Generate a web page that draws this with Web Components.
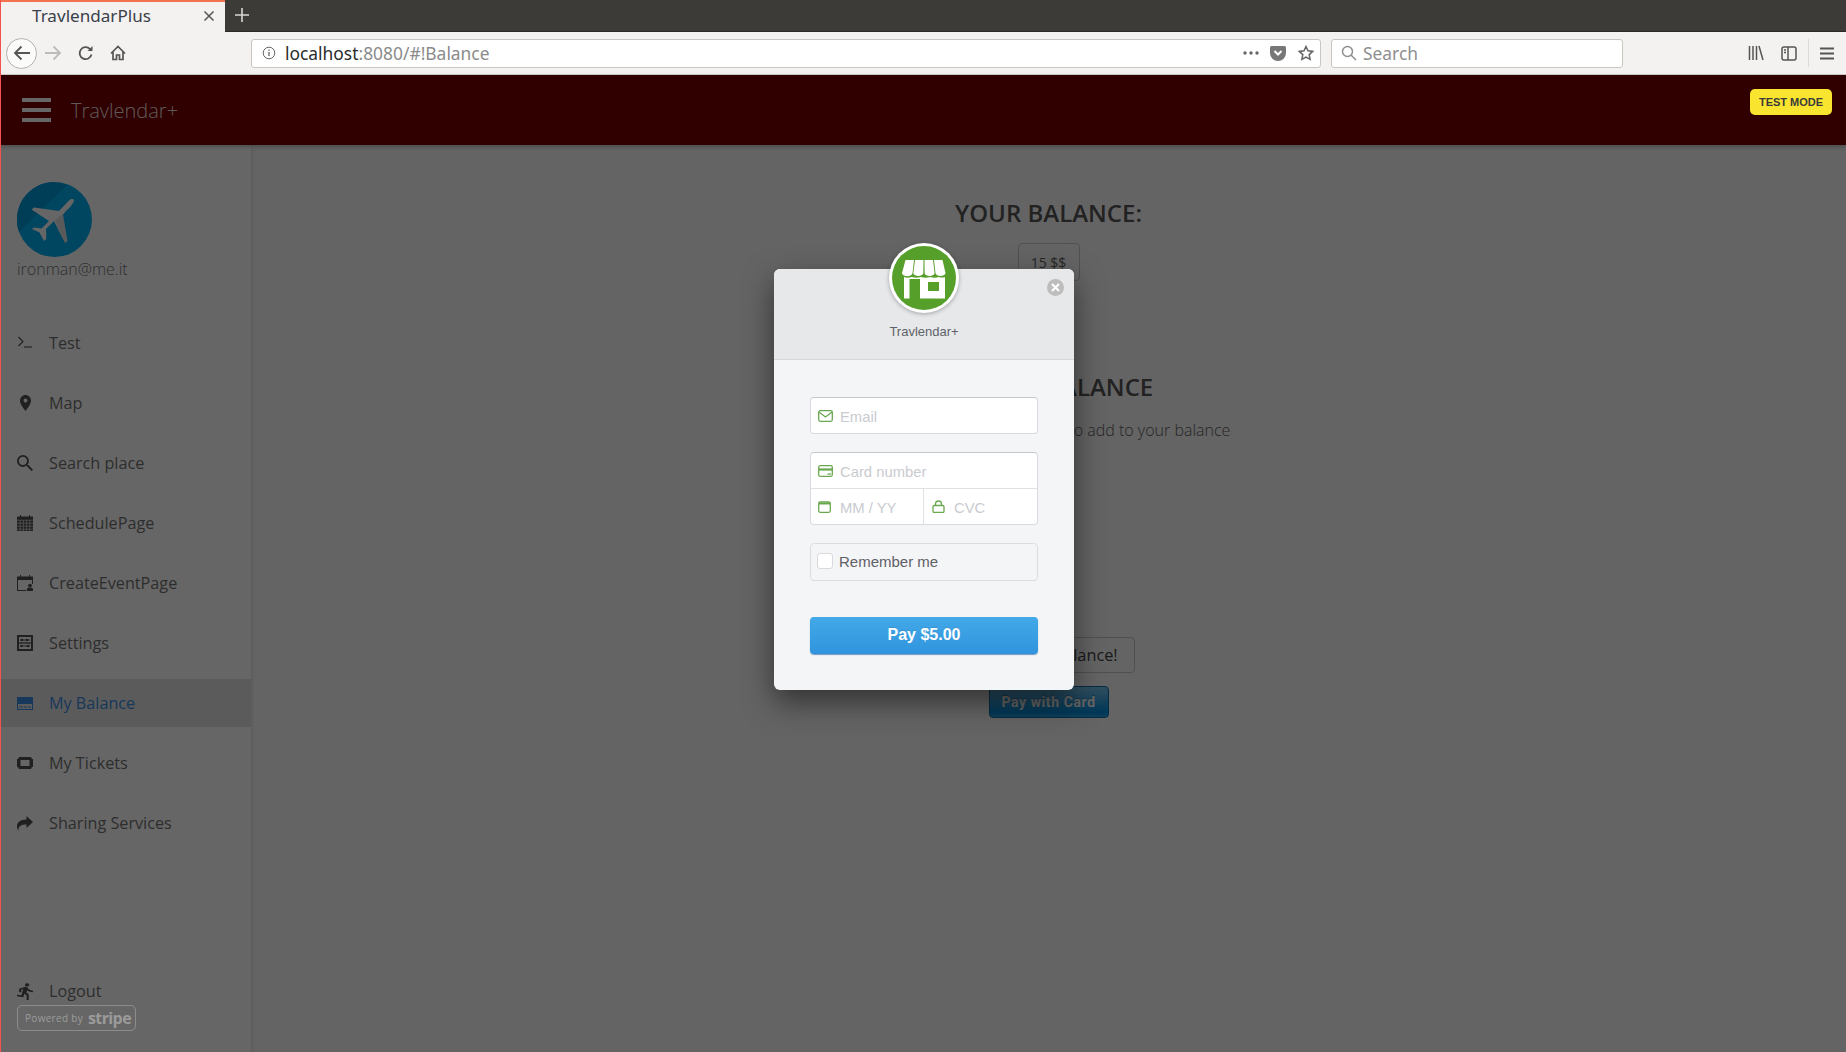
<!DOCTYPE html>
<html>
<head>
<meta charset="utf-8">
<title>TravlendarPlus</title>
<style>
  html, body { margin: 0; height: 100%; overflow: hidden; background: #fff; }
  body { font-family: "Open Sans", sans-serif; display: flex; flex-direction: column; height: 1052px; }
  body::before { content: ""; position: fixed; left: 0; top: 0; bottom: 0; width: 1px; background: #f4514f; z-index: 50; }
</style>
</head>
<body>
<browser-chrome></browser-chrome>
<travel-app>
  <side-drawer slot="drawer">
    <nav-item>
      <svg slot="icon" width="16" height="16" viewBox="0 0 16 16" fill="none" stroke="currentColor" stroke-width="1.1"><path d="M1.500 2 6 6.500 1.500 11"/><path d="M7 12h8"/></svg>
      Test
    </nav-item>
    <nav-item>
      <svg slot="icon" style="margin-left:3px" width="11" height="16" viewBox="5 2 14 20" preserveAspectRatio="none" fill="currentColor"><path d="M12 2C8.130 2 5 5.130 5 9c0 5.250 7 13 7 13s7-7.750 7-13c0-3.870-3.130-7-7-7zm0 9.500a2.500 2.500 0 0 1 0-5 2.500 2.500 0 0 1 0 5z"/></svg>
      Map
    </nav-item>
    <nav-item>
      <svg slot="icon" width="16" height="16" viewBox="3 3 17.500 17.500" fill="currentColor"><path d="M15.500 14h-.79l-.28-.27A6.471 6.471 0 0 0 16 9.500 6.500 6.500 0 1 0 9.500 16c1.610 0 3.090-.59 4.230-1.570l.27.28v.79l5 4.990L20.490 19l-4.990-5zm-6 0C7.010 14 5 11.990 5 9.500S7.010 5 9.500 5 14 7.010 14 9.500 11.990 14 9.500 14z"/></svg>
      Search place
    </nav-item>
    <nav-item>
      <svg slot="icon" width="16" height="16" viewBox="0 0 16 16" fill="currentColor"><path d="M0 1.500h3V0h1v1.500h8V0h1v1.500h3V16H0z"/><path d="M0 5.200h16M0 8.200h16M0 11.200h16M0 14.200h16M3.200 5v11M6.400 5v11M9.600 5v11M12.800 5v11" stroke="#fff" stroke-opacity=".7" stroke-width=".8"/></svg>
      SchedulePage
    </nav-item>
    <nav-item>
      <svg slot="icon" width="16" height="16" viewBox="0 0 16 16" fill="currentColor"><path fill-rule="evenodd" d="M0 1.500h3V0h1v1.500h8V0h1v1.500h3V9h-1V5H1v10h8v1H0z"/><circle cx="13" cy="10.600" r="1.900"/><path d="M9.800 16v-1.600c0-1.200 1.200-1.900 3.200-1.900s3 .7 3 1.900V16z"/></svg>
      CreateEventPage
    </nav-item>
    <nav-item>
      <svg slot="icon" width="16" height="16" viewBox="0 0 16 16" fill="currentColor"><path fill-rule="evenodd" d="M0 0h16v16H0zM2 2v12h12V2z"/><path d="M2 7.300h12v1.400H2z"/><path d="M3 4.500h10v1H3zM3 10.500h10v1H3z"/><circle cx="5" cy="5" r="1.300"/><circle cx="10" cy="5" r="1.300"/><circle cx="4.500" cy="11" r="1.300"/><circle cx="11" cy="11" r="1.300"/></svg>
      Settings
    </nav-item>
    <nav-item active>
      <svg slot="icon" width="16" height="13" viewBox="0 0 16 13" fill="currentColor"><path fill-rule="evenodd" d="M0 0h16v13H0zM1 7v5h14V7z"/><path d="M2 9.500h4v1H2zM7 9.500h3v1H7zM11 9.500h3v1h-3z"/></svg>
      My Balance
    </nav-item>
    <nav-item>
      <svg slot="icon" width="16" height="12" viewBox="0 0 16 12" fill="currentColor"><path fill-rule="evenodd" d="M2 0h12l1 2h1v8h-1l-1 2H2l-1-2H0V2h1zM3.500 3v6h9V3z"/></svg>
      My Tickets
    </nav-item>
    <nav-item>
      <svg slot="icon" width="16" height="15" viewBox="0 0 16 15" fill="currentColor"><path d="M16 6 9.500 0v3.500C3 3.500 0 6.500 0 10.500c0 1.500.5 3 1.500 4.500C1 10 4 8.500 9.500 8.500V12z"/></svg>
      Sharing Services
    </nav-item>
    <nav-item slot="bottom">
      <svg slot="icon" width="16" height="17" viewBox="4 1 15 22" fill="currentColor" preserveAspectRatio="none"><path d="M13.490 5.480c1.100 0 2-.9 2-2s-.9-2-2-2-2 .9-2 2 .9 2 2 2zm-3.600 13.900l1-4.400 2.100 2v6h2v-7.500l-2.100-2 .6-3c1.300 1.500 3.300 2.500 5.500 2.500v-2c-1.900 0-3.500-1-4.300-2.400l-1-1.600c-.4-.6-1-1-1.700-1-.3 0-.5.1-.8.1l-5.200 2.200v4.700h2v-3.400l1.800-.7-1.600 8.100-4.900-1-.4 2 7 1.400z"/></svg>
      Logout
    </nav-item>
  </side-drawer>
  <balance-page></balance-page>
  <checkout-overlay slot="overlay"></checkout-overlay>
</travel-app>

<script>
class BrowserChrome extends HTMLElement {
  constructor() {
    super();
    this.attachShadow({ mode: "open" });
    this.shadowRoot.innerHTML = `
<style>
  :host { display: block; height: 75px; font-family: "Noto Sans", sans-serif; color: #333; flex: none; }
  .tabs { height: 32px; background: #3c3b37; display: flex; box-sizing: border-box; border-bottom: 1px solid #2b2a27; }
  .tab { width: 225px; height: 32px; box-sizing: border-box; background: #f3f2f0; border-top: 2px solid #f4714f; display: flex; align-items: center; padding: 0 10px 3px 32px; font-size: 17.100px; color: #3a3f4a; justify-content: space-between; }
  .new { width: 34px; display: flex; align-items: center; justify-content: center; padding-bottom: 2px; }
  .bar { height: 43px; box-sizing: border-box; background: #f3f2f0; border-bottom: 1px solid #cfcdca; display: flex; align-items: center; position: relative; padding-left: 6px; }
  .btn { width: 32px; height: 32px; display: flex; align-items: center; justify-content: center; flex: none; }
  .nudge { margin-left: 1px; margin-right: -1px; }
  .back { width: 31px; height: 31px; border: 1px solid #b5b3b0; border-radius: 50%; box-sizing: border-box; background: #fbfbfa; }
  .field { height: 29px; box-sizing: border-box; background: #fff; border: 1px solid #c9c6c2; border-radius: 3px; display: flex; align-items: center; font-size: 17.400px; }
  .url { width: 1070px; margin-left: 118px; padding: 0 6px 0 10px; }
  .url .host { color: #2b2b2b; }
  .url .rest { color: #8b8b8b; }
  .url .spacer { flex: 1; }
  .search { width: 292px; margin-left: 10px; padding-left: 9px; color: #8f8f8f; gap: 6px; }
  .right { position: absolute; right: 0; top: 0; bottom: 0; display: flex; align-items: center; }
  .sep { width: 1px; height: 28px; background: #dcdad7; margin: 0 11px 0 10px; }
</style>
<div class="tabs">
  <div class="tab">
    <span>TravlendarPlus</span>
    <svg width="12" height="12" viewBox="0 0 12 12" stroke="#555" stroke-width="1.500"><path d="M1.500 1.500l9 9M10.500 1.500l-9 9"/></svg>
  </div>
  <div class="new"><svg width="14" height="14" viewBox="0 0 14 14" stroke="#d9d8d5" stroke-width="1.600"><path d="M7 0v14M0 7h14"/></svg></div>
</div>
<div class="bar">
  <div class="btn back"><svg width="18" height="16" viewBox="0 0 18 16" fill="none" stroke="#555" stroke-width="1.800"><path d="M17 8H2M8.500 1.500 2 8l6.500 6.500"/></svg></div>
  <div class="btn"><svg width="18" height="16" viewBox="0 0 18 16" fill="none" stroke="#bcbcbc" stroke-width="1.800"><path d="M1 8h15M9.500 1.500 16 8l-6.500 6.500"/></svg></div>
  <div class="btn nudge"><svg width="16" height="16" viewBox="0 0 16 16" fill="none" stroke="#555" stroke-width="1.800"><path d="M13.500 9.500a6 6 0 1 1-1.500-5.500l1.500 1.500"/><path d="M14.500 1v5h-5" fill="#555" stroke="none"/></svg></div>
  <div class="btn nudge"><svg width="16" height="16" viewBox="0 0 16 16" fill="none" stroke="#555" stroke-width="1.700"><path d="M1 8.500 8 1.500l7 7M3 7v7.500h3.500V10h3v4.500H13V7"/></svg></div>
  <div class="field url">
    <svg width="14" height="14" viewBox="0 0 14 14" style="margin:0 9px 0 0" fill="none" stroke="#666"><circle cx="7" cy="7" r="5.800"/><path d="M7 6v4M7 3.500v1.200" stroke-width="1.300"/></svg>
    <span class="host">localhost</span><span class="rest">:8080/#!Balance</span>
    <span class="spacer"></span>
    <svg width="16" height="4" viewBox="0 0 16 4" fill="#666" style="margin-right:11px"><circle cx="2" cy="2" r="1.700"/><circle cx="8" cy="2" r="1.700"/><circle cx="14" cy="2" r="1.700"/></svg>
    <svg width="16" height="15" viewBox="0 0 16 15" style="margin-right:12px"><path fill="#777" d="M1.500 0h13A1.500 1.500 0 0 1 16 1.500V7a8 8 0 0 1-16 0V1.500A1.500 1.500 0 0 1 1.500 0z"/><path d="M4.500 5 8 8.500 11.500 5" stroke="#fff" stroke-width="2" fill="none"/></svg>
    <svg width="16" height="16" viewBox="0 0 16 16" fill="none" stroke="#666" stroke-width="1.500"><path d="M8 1.500l2 4.300 4.700.6-3.500 3.200.9 4.700L8 12l-4.100 2.300.9-4.700L1.300 6.400 6 5.800z"/></svg>
  </div>
  <div class="field search">
    <svg width="16" height="16" viewBox="0 0 16 16" fill="none" stroke="#8f8f8f" stroke-width="1.500"><circle cx="6.500" cy="6.500" r="5"/><path d="M10 10l5 5"/></svg>
    <span>Search</span>
  </div>
  <div class="right">
    <svg width="16" height="16" viewBox="0 0 16 16" stroke="#555" stroke-width="1.500" fill="none" style="margin-right:17px"><path d="M1.500 1v14M5 1v14M8.500 1v14M11 1l4 14"/></svg>
    <svg width="16" height="15" viewBox="0 0 16 15" fill="none" stroke="#555" stroke-width="1.500" style="margin-right:1px"><rect x="1" y="1" width="14" height="13" rx="2"/><path d="M7 1v13M3 4h2M3 6.500h2" /></svg>
    <span class="sep"></span>
    <svg width="14" height="13" viewBox="0 0 14 13" stroke="#555" stroke-width="2" style="margin-right:12px"><path d="M0 1.500h14M0 6.500h14M0 11.500h14"/></svg>
  </div>
</div>`;
  }
}

class TravelApp extends HTMLElement {
  constructor() {
    super();
    this.attachShadow({ mode: "open" });
    this.shadowRoot.innerHTML = `
<style>
  :host { display: flex; flex-direction: column; flex: 1; min-height: 0; position: relative; }
  header { height: 70px; flex: none; background: #780000; display: flex; align-items: center; padding-left: 22px; gap: 20px; box-shadow: 0 2px 4px rgba(0,0,0,.25); z-index: 2; }
  .burger { width: 29px; display: flex; flex-direction: column; gap: 6px; }
  .burger i { display: block; height: 4px; background: #fff; }
  .title { font: 300 20px "Open Sans", sans-serif; color: rgba(255,255,255,.88); }
  .body { flex: 1; display: flex; min-height: 0; }
</style>
<header>
  <div class="burger"><i></i><i></i><i></i></div>
  <div class="title">Travlendar+</div>
</header>
<div class="body">
  <slot name="drawer"></slot>
  <slot></slot>
</div>
<slot name="overlay"></slot>`;
  }
}

class SideDrawer extends HTMLElement {
  constructor() {
    super();
    this.attachShadow({ mode: "open" });
    this.shadowRoot.innerHTML = `
<style>
  :host { display: flex; flex-direction: column; width: 251px; flex: none; box-sizing: border-box; background: #fff; padding: 37px 0 37px 1px; box-shadow: 0 2px 5px rgba(0,0,0,.16); z-index: 1; }
  .avatar { width: 75px; height: 75px; margin-left: 16px; display: block; }
  .mail { margin: 0 0 38px 16px; font: 300 16px/24px "Open Sans", sans-serif; color: #757575; }
  nav { display: flex; flex-direction: column; gap: 12px; flex: 1; }
</style>
<svg class="avatar" viewBox="0 0 75 75">
  <circle cx="37.500" cy="37.500" r="37.500" fill="#00b0f0"/>
  <path d="M37.500 0A37.500 37.500 0 0 0 2 50L50 3a37.500 37.500 0 0 0-12.500-3z" fill="#0098d8"/>
  <path fill="#fff" d="M52 18.500c3-2.500 6-1.500 4.500 1.500-1.500 3-4 6-7.500 9l-3 3.500 4.500 26.500-2.500 2L37 39l-8 8 .3 10-2.300 2-4.500-8.500L15 47l2-1.500 7.500 1L32 39 14.500 27.500l2.500-2L42 29z"/>
  <path fill="#000" fill-opacity=".12" d="M38 38l8-6 4.500 27-2.500 2z"/>
</svg>
<div class="mail">ironman@me.it</div>
<nav><slot></slot></nav>
<slot name="bottom"></slot>`;
  }
}

class NavItem extends HTMLElement {
  constructor() {
    super();
    this.attachShadow({ mode: "open" });
    this.shadowRoot.innerHTML = `
<style>
  :host { display: flex; align-items: center; height: 48px; padding-left: 16px; font: 400 16.200px "Open Sans", sans-serif; color: #727272; }
  :host([active]) { background: #e4e4e4; color: #3a8ce0; }
  .icon { width: 32px; flex: none; display: flex; align-items: center; }
  ::slotted(svg) { display: block; color: #505050; }
  :host([active]) ::slotted(svg) { color: inherit; }
</style>
<span class="icon"><slot name="icon"></slot></span>
<slot></slot>`;
  }
}

class BalancePage extends HTMLElement {
  constructor() {
    super();
    this.attachShadow({ mode: "open" });
    this.shadowRoot.innerHTML = `
<style>
  :host { display: flex; flex-direction: column; align-items: center; flex: 1; padding-top: 52px; font-family: "Open Sans", sans-serif; color: #616161; background: #fafafa; }
  h2 { margin: 0; font: 600 24px/32px "Open Sans", sans-serif; color: #565656; }
  .amount { margin-top: 14px; height: 38px; width: 62px; box-sizing: border-box; border: 1px solid #c8c8c8; border-radius: 4px; display: flex; align-items: center; justify-content: center; font-size: 14px; color: #616161; }
  .second { margin-top: 90px; }
  p { margin: 15px 0 0; font: 300 16px/24px "Open Sans", sans-serif; color: #616161; height: 24px; }
  .add { margin-top: 195px; width: 172px; height: 36px; box-sizing: border-box; border: 1px solid #c8c8c8; border-radius: 4px; display: flex; align-items: center; justify-content: center; font-size: 16.300px; color: #424242; }
  .pay { margin-top: 13px; width: 120px; height: 32px; box-sizing: border-box; border-radius: 4px; border: 1px solid #0e6ea8; background: linear-gradient(#7dc5ee, #008cdd 85%, #30a2e4); display: flex; align-items: center; justify-content: center; font: 700 14px Roboto, sans-serif; letter-spacing: .6px; color: #fff; text-shadow: 0 -1px 0 rgba(0,0,0,.25); }
</style>
<h2>YOUR BALANCE:</h2>
<div class="amount">15 $$</div>
<h2 class="second">CHARGE BALANCE</h2>
<p>Select the amount you wish to add to your balance</p>
<div class="add">Recharge balance!</div>
<div class="pay">Pay with Card</div>`;
  }
}

class CheckoutOverlay extends HTMLElement {
  constructor() {
    super();
    this.attachShadow({ mode: "open" });
    this.shadowRoot.innerHTML = `
<style>
  :host { position: absolute; inset: 0; z-index: 10; background: rgba(0,0,0,.6); display: flex; justify-content: center; align-items: flex-start; padding: 194px 0 0 2px; box-sizing: border-box; }
  .test { position: absolute; top: 14px; right: 14px; width: 82px; height: 26px; box-sizing: border-box; border-radius: 5px; background: #f9e52f; display: flex; align-items: center; justify-content: center; font: 700 11px "Liberation Sans", sans-serif; color: #3a3a3a; }
  .powered { position: absolute; left: 17px; bottom: 21px; width: 119px; height: 26px; box-sizing: border-box; border: 1px solid rgba(255,255,255,.25); border-radius: 5px; display: flex; align-items: center; gap: 5px; padding-left: 7px; white-space: nowrap; font: 400 10px "Open Sans", sans-serif; color: rgba(255,255,255,.36); letter-spacing: .3px; }
  .powered b { font: 700 16px "Open Sans", sans-serif; letter-spacing: -.6px; }
</style>
<div class="test">TEST MODE</div>
<div class="powered"><span>Powered by</span><b>stripe</b></div>
<checkout-modal></checkout-modal>`;
  }
}

class CheckoutModal extends HTMLElement {
  constructor() {
    super();
    this.attachShadow({ mode: "open" });
    this.shadowRoot.innerHTML = `
<style>
  :host { display: block; position: relative; width: 300px; height: 421px; border-radius: 6px; background: #f4f5f7; box-shadow: 0 12px 30px rgba(0,0,0,.5); font-family: "Liberation Sans", sans-serif; }
  .head { height: 91px; box-sizing: border-box; background: #e6e8ea; border-radius: 6px 6px 0 0; border-bottom: 1px solid #d5d7da; display: flex; justify-content: center; padding-top: 54px; font-size: 13px; line-height: 18px; color: #5f6368; }
  .logo { position: absolute; left: 115px; top: -26px; width: 70px; height: 70px; filter: drop-shadow(0 1px 2px rgba(0,0,0,.3)); }
  .close { position: absolute; top: 10px; right: 10px; width: 17px; height: 17px; }
  form { display: flex; flex-direction: column; padding: 37px 36px; }
  .group { border: 1px solid #d9dadd; border-top-color: #c6c7ca; border-radius: 4px; background: #fff; margin-bottom: 18px; }
  .row { display: flex; height: 35px; }
  .row + .row { border-top: 1px solid #e0e1e4; }
  checkout-field { flex: 1; }
  checkout-field.half { flex: 0 0 112px; }
  checkout-field + checkout-field { border-left: 1px solid #e0e1e4; padding-left: 8px; }
  .remember { height: 38px; box-sizing: border-box; border: 1px solid #dcdde0; border-radius: 4px; display: flex; align-items: center; padding: 0 0 2px 6px; gap: 6px; font-size: 15px; color: #5f6066; margin-bottom: 36px; }
  .check { width: 14px; height: 14px; background: #fff; border: 1px solid #d9dadd; border-radius: 3px; }
  .submit { height: 37px; padding-bottom: 2px; box-sizing: border-box; border-radius: 4px; background: linear-gradient(#43a9e8, #2f94dd); box-shadow: 0 1px 1px rgba(30,90,160,.6); display: flex; align-items: center; justify-content: center; color: #fff; font-weight: 700; font-size: 16px; text-shadow: 0 -1px 0 rgba(0,0,0,.1); }
  svg.f { display: block; fill: none; stroke: #6aa84f; stroke-width: 1.300; }
</style>
<div class="head">
  <svg class="logo" viewBox="0 0 70 70">
    <circle cx="35" cy="35" r="35" fill="#fff"/>
    <circle cx="35" cy="35" r="32" fill="#559f2a"/>
    <g fill="#fff">
      <path d="M16.500 17h8.500l-1.500 13a5 3 0 0 1-10.500 0z"/>
      <path d="M26 17h8.500l-.2 13a5 3 0 0 1-10 0z"/>
      <path d="M35.500 17h8.500l1.600 13a5 3 0 0 1-10 0z"/>
      <path d="M45 17h8.500l3 13a5 3 0 0 1-10 0z"/>
      <path fill-rule="evenodd" d="M15 34c2 1 5 1 8 0 3 1 6 1 9 0 3 1 6 1 9 0 3 1 6 1 9 0 2 .8 4 .8 6 0v21.500H31V36H20.500v19.500H15zM39 39v9h11v-9z"/>
    </g>
  </svg>
  <span>Travlendar+</span>
  <svg class="close" viewBox="0 0 17 17"><circle cx="8.500" cy="8.500" r="8.500" fill="#bdbdbd"/><path d="M5 5l7 7M12 5l-7 7" stroke="#fff" stroke-width="2.200"/></svg>
</div>
<form>
  <div class="group">
    <div class="row">
      <checkout-field text="Email"><svg class="f" slot="icon" width="15" height="12" viewBox="0 0 15 12"><rect x=".7" y=".7" width="13.600" height="10.600" rx="1.500"/><path d="M1 2l6.500 5L14 2"/></svg></checkout-field>
    </div>
  </div>
  <div class="group">
    <div class="row">
      <checkout-field text="Card number"><svg class="f" slot="icon" width="15" height="12" viewBox="0 0 15 12"><rect x=".7" y=".7" width="13.600" height="10.600" rx="1.500"/><path d="M1 4.500h13" stroke-width="2.200"/><path d="M9.500 9H13"/></svg></checkout-field>
    </div>
    <div class="row">
      <checkout-field class="half" text="MM / YY"><svg class="f" slot="icon" width="13" height="13" viewBox="0 0 13 13"><rect x=".7" y="2" width="11.600" height="10.300" rx="1.500"/><path d="M1 3.500h11" stroke-width="2"/></svg></checkout-field>
      <checkout-field text="CVC"><svg class="f" slot="icon" width="13" height="13" viewBox="0 0 13 13"><rect x="1" y="5.500" width="11" height="7" rx="1.200"/><path d="M3.500 5.500V4a3 3 0 0 1 6 0v1.500"/></svg></checkout-field>
    </div>
  </div>
  <div class="remember"><span class="check"></span><span>Remember me</span></div>
  <div class="submit">Pay $5.00</div>
</form>`;
  }
}

class CheckoutField extends HTMLElement {
  constructor() {
    super();
    this.attachShadow({ mode: "open" });
    this.shadowRoot.innerHTML = `
<style>
  :host { display: flex; align-items: center; padding-left: 7px; font: 14.800px "Liberation Sans", sans-serif; color: #c9cbd0; box-sizing: border-box; }
  .icon { width: 22px; flex: none; display: flex; }
  .text { padding-top: 2px; }
</style>
<span class="icon"><slot name="icon"></slot></span>
<span class="text">${this.getAttribute("text") || ""}</span>`;
  }
}

customElements.define("browser-chrome", BrowserChrome);
customElements.define("travel-app", TravelApp);
customElements.define("side-drawer", SideDrawer);
customElements.define("nav-item", NavItem);
customElements.define("balance-page", BalancePage);
customElements.define("checkout-overlay", CheckoutOverlay);
customElements.define("checkout-modal", CheckoutModal);
customElements.define("checkout-field", CheckoutField);
</script>
</body>
</html>
